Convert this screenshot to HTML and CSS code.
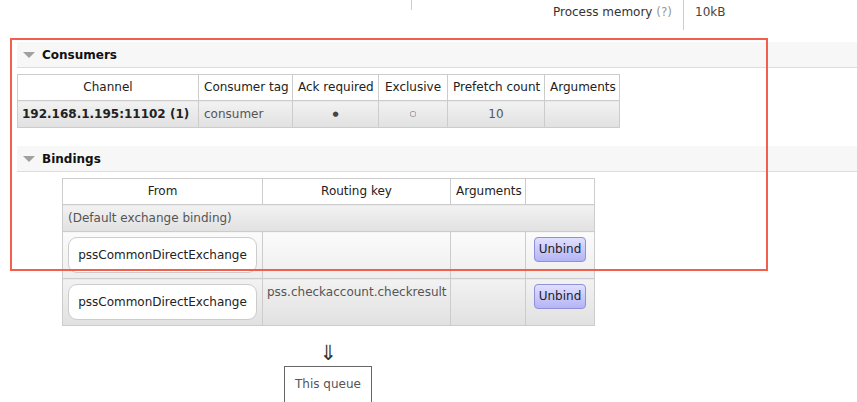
FILE: index.html
```html
<!DOCTYPE html>
<html>
<head>
<meta charset="utf-8">
<title>Queue</title>
<link rel="stylesheet" href="styles.css">
</head>
<body>
<div class="top">
  <div class="stub"></div>
  <div class="stat-label">Process memory <span class="help">(?)</span></div>
  <div class="stat-value">10kB</div>
</div>

<div class="section">
  <h2 class="section-h"><span class="tri"></span>Consumers</h2>
  <table class="list consumers">
    <colgroup>
      <col class="c-channel"><col class="c-tag"><col class="c-ack"><col class="c-excl"><col class="c-prefetch"><col class="c-args">
    </colgroup>
    <thead>
      <tr><th>Channel</th><th>Consumer tag</th><th>Ack required</th><th>Exclusive</th><th>Prefetch count</th><th>Arguments</th></tr>
    </thead>
    <tbody>
      <tr class="alt1">
        <td class="strong">192.168.1.195:11102 (1)</td>
        <td>consumer</td>
        <td class="c"><span class="mark dot">&#9679;</span></td>
        <td class="c"><span class="mark ring">&#9675;</span></td>
        <td class="c">10</td>
        <td></td>
      </tr>
    </tbody>
  </table>
</div>

<div class="section">
  <h2 class="section-h"><span class="tri"></span>Bindings</h2>
  <div class="bindings-wrapper">
    <table class="list bindings">
      <colgroup>
        <col class="b-from"><col class="b-key"><col class="b-args"><col class="b-act">
      </colgroup>
      <thead>
        <tr><th>From</th><th>Routing key</th><th>Arguments</th><th></th></tr>
      </thead>
      <tbody>
        <tr class="alt1"><td colspan="4">(Default exchange binding)</td></tr>
        <tr class="alt2">
          <td><span class="exchange">pssCommonDirectExchange</span></td>
          <td></td>
          <td></td>
          <td class="c"><span class="btn">Unbind</span></td>
        </tr>
        <tr class="alt1">
          <td><span class="exchange">pssCommonDirectExchange</span></td>
          <td>pss.checkaccount.checkresult</td>
          <td></td>
          <td class="c"><span class="btn">Unbind</span></td>
        </tr>
      </tbody>
    </table>
    <div class="arrow">&#8659;</div>
    <div class="queue-wrap"><span class="this-queue">This queue</span></div>
  </div>
</div>

<div class="highlight"></div>
</body>
</html>
```

FILE: styles.css
```css
* { box-sizing: border-box; }

html, body {
  margin: 0;
  padding: 0;
  background: #fff;
}

body {
  font-family: "DejaVu Sans", Verdana, sans-serif;
  font-size: 12px;
  color: #444;
  position: relative;
  height: 402px;
  overflow: hidden;
}

/* top stats strip */
.top {
  display: flex;
  align-items: flex-start;
  height: 42px;
}
.stub {
  width: 412px;
  height: 10px;
  border-right: 1px solid #ccc;
}
.stat-label {
  width: 272px;
  height: 30px;
  border-right: 1px solid #ccc;
  text-align: right;
  padding: 5px 11px 0 0;
  line-height: 15px;
  color: #333;
}
.help { color: #999; }
.stat-value {
  padding: 5px 0 0 11px;
  line-height: 15px;
  color: #444;
}

/* sections */
.section {
  margin-left: 17px;
}
.section-h {
  display: flex;
  align-items: center;
  height: 26px;
  margin: 0;
  padding-left: 6px;
  background: #f7f7f7;
  border-bottom: 1px solid #ddd;
  font-size: 12px;
  font-weight: bold;
  color: #111;
}
.tri {
  width: 0;
  height: 0;
  border-left: 6px solid transparent;
  border-right: 6px solid transparent;
  border-top: 6px solid #a0a0a0;
  margin-right: 7px;
}

/* tables */
table.list {
  border-collapse: collapse;
  table-layout: fixed;
  margin-top: 6px;
}
table.list th,
table.list td {
  border: 1px solid #ccc;
  padding: 5px 5px;
  line-height: 15px;
  height: 16px;
  vertical-align: top;
  white-space: nowrap;
  overflow: hidden;
}
table.list th {
  font-weight: normal;
  color: #222;
  background: #fff;
  text-align: center;
}
table.list td { color: #555; }
table.list td.c { text-align: center; }
table.list td.strong {
  font-weight: bold;
  color: #222;
  padding-left: 4px;
  padding-right: 2px;
}
tr.alt1 td { background: linear-gradient(#f2f2f2, #e1e1e1); }
tr.alt2 td { background: linear-gradient(#fbfbfb, #eeeeee); }

.mark {
  display: inline-block;
  height: 16px;
  line-height: 16px;
  vertical-align: top;
  overflow: hidden;
}
.dot {
  font-size: 7px;
  color: #444;
}
.ring {
  font-size: 8px;
  color: #444;
  font-weight: bold;
}

table.consumers { width: 602px; margin-bottom: 18px; }
table.consumers td { line-height: 16px; }
.c-channel { width: 181px; }
.c-tag { width: 94px; }
.c-ack { width: 86px; }
.c-excl { width: 69px; }
.c-prefetch { width: 97px; }
.c-args { width: 75px; }

.bindings-wrapper {
  margin-left: 45px;
  width: 532px;
}
table.bindings { width: 532px; }
table.bindings td { line-height: 16px; }
table.bindings td:nth-child(2) { padding-left: 4px; }
.b-from { width: 200px; }
.b-key { width: 188px; }
.b-args { width: 75px; }
.b-act { width: 69px; }

.exchange {
  display: block;
  height: 36px;
  line-height: 34px;
  border: 1px solid #ccc;
  border-radius: 9px;
  background: #fff;
  color: #222;
  text-align: center;
}
.btn {
  display: inline-block;
  height: 25px;
  line-height: 23px;
  padding: 0 4px;
  border: 1px solid #9090d8;
  border-radius: 4px;
  background: linear-gradient(#e0e0ff, #b4b4f6);
  color: #222;
}

.arrow {
  text-align: center;
  font-size: 21px;
  line-height: 22px;
  padding-top: 16px;
  color: #333;
}
.queue-wrap {
  text-align: center;
  padding-top: 2px;
}
.this-queue {
  display: inline-block;
  border: 1px solid #666;
  padding: 10px 10px;
  line-height: 15px;
  color: #555;
}

/* annotation overlay */
.highlight {
  position: absolute;
  left: 10px;
  top: 38px;
  width: 758px;
  height: 233px;
  border: 2px solid #f25f4c;
  pointer-events: none;
}
```
